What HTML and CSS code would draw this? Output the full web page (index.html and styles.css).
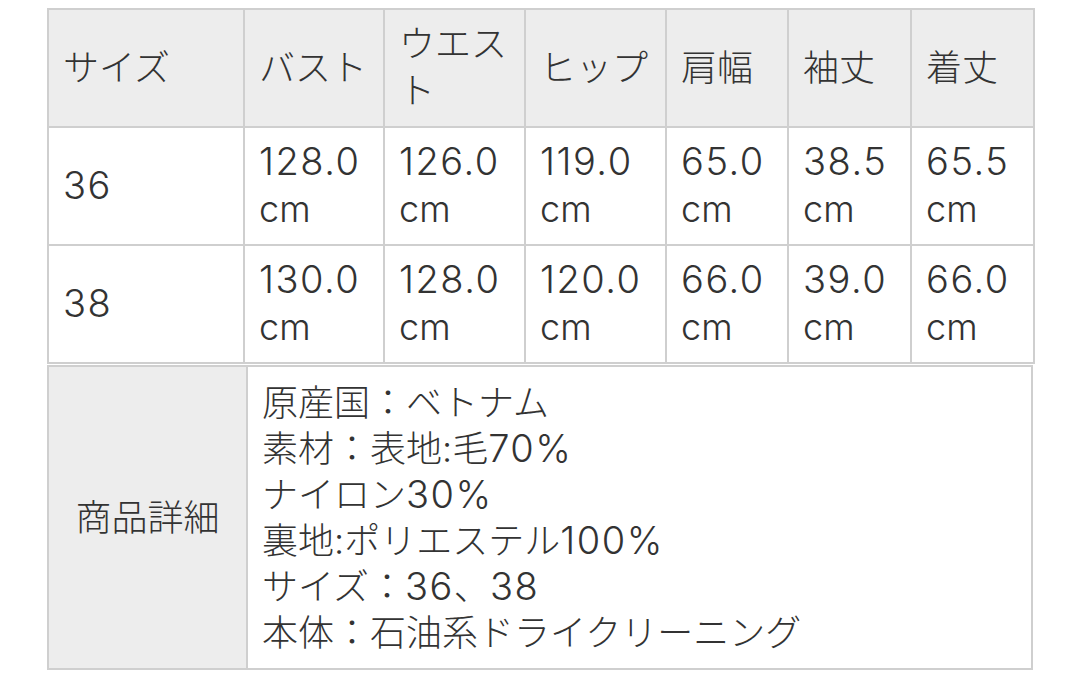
FILE: index.html
```html
<!DOCTYPE html>
<html lang="ja">
<head>
<meta charset="utf-8">
<link rel="stylesheet" href="styles.css">
</head>
<body>
<div class="wrap">
  <table class="size-table">
    <colgroup>
      <col class="c1"><col class="c2"><col class="c3"><col class="c4"><col class="c5"><col class="c6"><col class="c7">
    </colgroup>
    <thead>
      <tr>
        <th>サイズ</th><th>バスト</th><th>ウエスト</th><th>ヒップ</th><th>肩幅</th><th>袖丈</th><th>着丈</th>
      </tr>
    </thead>
    <tbody>
      <tr>
        <td><span class="n">36</span></td><td><span class="n">128.0</span> cm</td><td><span class="n">126.0</span> cm</td><td><span class="n">119.0</span> cm</td><td><span class="n">65.0</span> cm</td><td><span class="n">38.5</span> cm</td><td><span class="n">65.5</span> cm</td>
      </tr>
      <tr>
        <td><span class="n">38</span></td><td><span class="n">130.0</span> cm</td><td><span class="n">128.0</span> cm</td><td><span class="n">120.0</span> cm</td><td><span class="n">66.0</span> cm</td><td><span class="n">39.0</span> cm</td><td><span class="n">66.0</span> cm</td>
      </tr>
    </tbody>
  </table>
  <table class="detail-table">
    <colgroup><col class="d1"><col class="d2"></colgroup>
    <tbody>
      <tr>
        <th>商品詳細</th>
        <td>原産国：ベトナム<br>素材：表地:毛<span class="n">70%</span><br>ナイロン<span class="n">30%</span><br>裏地:ポリエステル<span class="n">100%</span><br>サイズ：<span class="n">36</span>、<span class="n">38</span><br>本体：石油系ドライクリーニング</td>
      </tr>
    </tbody>
  </table>
</div>
</body>
</html>
```
FILE: styles.css
```css
html, body {
  margin: 0;
  padding: 0;
  background: #ffffff;
}
.wrap {
  padding: 8px 0 0 47px;
  font-family: "Inter", "Noto Sans CJK JP", "Noto Sans", sans-serif;
  font-weight: 300;
  font-size: 36px;
  line-height: 47px;
  color: #333333;
}
.n {
  font-size: 38px;
  line-height: 1;
  letter-spacing: 0.04em;
}
table {
  border-collapse: collapse;
  table-layout: fixed;
  width: 986px;
}
th, td {
  border: 2px solid #cfcfcf;
  text-align: left;
  vertical-align: middle;
  font-weight: 300;
  padding: 0 12px 0 14px;
}
.size-table th,
.size-table td {
  height: 118px;
  box-sizing: border-box;
}
.size-table th {
  background: #ededed;
}
.c1 { width: 196px; }
.c2 { width: 140px; }
.c3 { width: 141px; }
.c4 { width: 141px; }
.c5 { width: 122px; }
.c6 { width: 123px; }
.c7 { width: 123px; }
.detail-table {
  margin-top: 1px;
  line-height: 46px;
}
.d1 { width: 199px; }
.detail-table th {
  background: #ededed;
  text-align: center;
  padding: 0;
}
.detail-table td {
  padding: 13px 15px 12px 14px;
}
```
